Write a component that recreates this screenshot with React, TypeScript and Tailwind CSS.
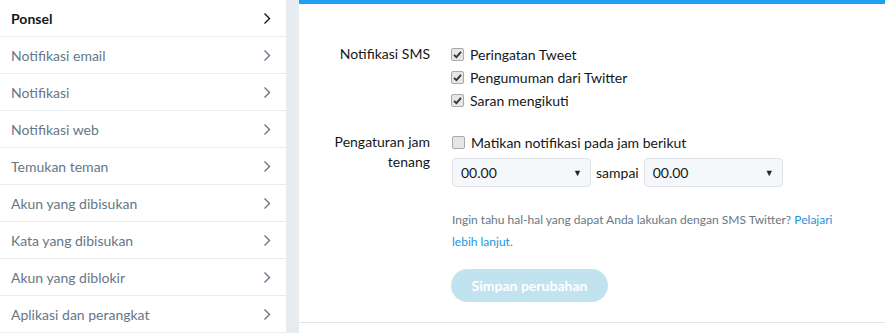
import React from "react";

const items = [
  "Ponsel",
  "Notifikasi email",
  "Notifikasi",
  "Notifikasi web",
  "Temukan teman",
  "Akun yang dibisukan",
  "Kata yang dibisukan",
  "Akun yang diblokir",
  "Aplikasi dan perangkat",
];

function Chevron({ dark }: { dark?: boolean }) {
  return (
    <svg width="8" height="13" viewBox="0 0 8 13" className="shrink-0">
      <path d="M1.5 1.5 L6.5 6.5 L1.5 11.5" fill="none" stroke={dark ? "#14171a" : "#657786"} strokeWidth="1.4" />
    </svg>
  );
}

function Box({ checked }: { checked?: boolean }) {
  return (
    <span className="w-[13px] h-[13px] rounded-[2px] border border-[#a9a9a9] bg-[#e6e6e6] flex items-center justify-center shrink-0">
      {checked && (
        <svg width="9" height="9" viewBox="0 0 9 9">
          <path d="M1 4.8 L3.4 7.2 L8 1.8" fill="none" stroke="#333" strokeWidth="1.8" />
        </svg>
      )}
    </span>
  );
}

function Select() {
  return (
    <div className="w-[139px] h-[29px] rounded-[4px] border border-[#dde3e8] bg-[#f5f8fa] flex items-center justify-between pl-[8px] pr-[8px] text-[14px] text-[#14171a]">
      <span>00.00</span>
      <span className="text-[9px] text-[#222]">▼</span>
    </div>
  );
}

export default function App() {
  return (
    <div className="w-[885px] h-[333px] bg-[#e6ecf0] flex overflow-hidden" style={{ fontFamily: "Lato, 'Noto Sans', sans-serif" }}>
      <div className="w-[286px] bg-white flex flex-col shrink-0">
        {items.map((t, i) => (
          <div key={t} className="h-[37px] shrink-0 border-b border-[#e6ecf0] flex items-center justify-between pl-[11px] pr-[15px]">
            <span className={i === 0 ? "text-[14px] font-bold text-[#14171a]" : "text-[14px] text-[#657786]"}>{t}</span>
            <Chevron dark={i === 0} />
          </div>
        ))}
      </div>
      <div className="w-[13px] shrink-0" />
      <div className="flex-1 bg-white">
        <div className="h-[323px] border-t-[4px] border-[#1da1f2] border-b border-b-[#e1e8ed] flex flex-col text-[14px] text-[#14171a]">
          <div className="flex pt-[39px]">
            <div className="w-[131px] text-right leading-[22px]">Notifikasi SMS</div>
            <div className="pl-[21px] flex flex-col gap-[1px]">
              {["Peringatan Tweet", "Pengumuman dari Twitter", "Saran mengikuti"].map((t) => (
                <div key={t} className="flex items-center gap-[6px] h-[22px]">
                  <Box checked />
                  <span>{t}</span>
                </div>
              ))}
            </div>
          </div>
          <div className="flex pt-[21px]">
            <div className="w-[131px] text-right leading-[20px]">
              Pengaturan jam
              <br />
              tenang
            </div>
            <div className="pl-[22px] flex flex-col">
              <div className="flex items-center gap-[6px] h-[20px]">
                <Box />
                <span>Matikan notifikasi pada jam berikut</span>
              </div>
              <div className="flex items-center gap-[5px] mt-[6px]">
                <Select />
                <span>sampai</span>
                <Select />
              </div>
            </div>
          </div>
          <div className="pl-[153px] pt-[22px] text-[12px] leading-[22px] text-[#657786]">
            <div>
              Ingin tahu hal-hal yang dapat Anda lakukan dengan SMS Twitter? <span className="text-[#1b95e0]">Pelajari</span>
            </div>
            <div className="text-[#1b95e0]">lebih lanjut.</div>
          </div>
          <div className="pl-[152px] pt-[16px]">
            <button className="h-[33px] w-[157px] rounded-full bg-[#c1e3ef] text-white font-bold text-[14px]">Simpan perubahan</button>
          </div>
        </div>
      </div>
    </div>
  );
}
